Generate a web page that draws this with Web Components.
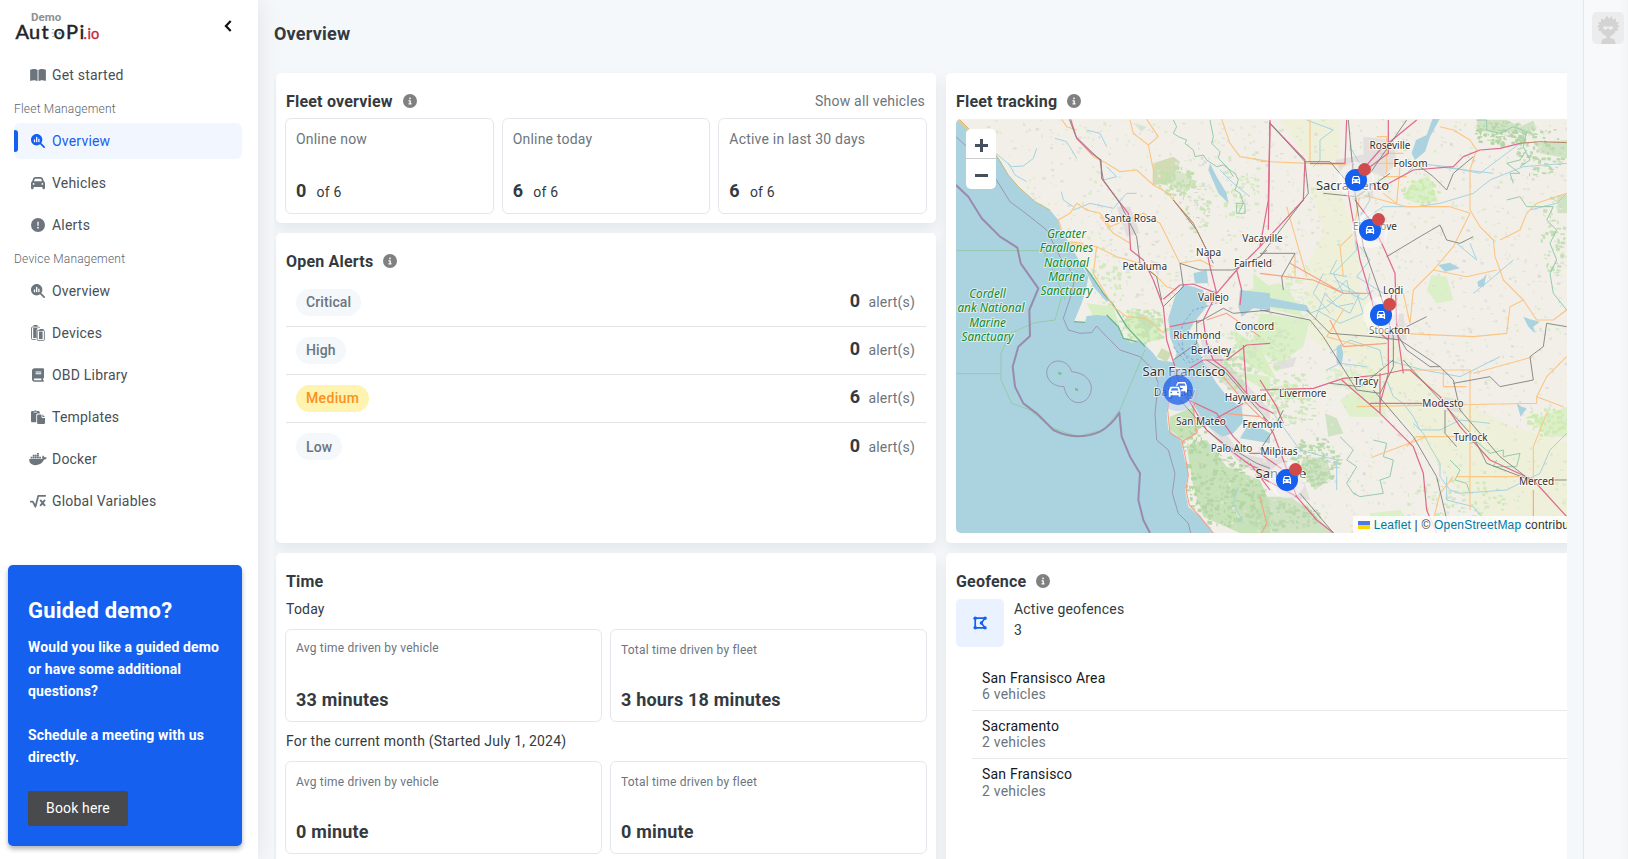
<!DOCTYPE html>
<html lang="en">
<head>
<meta charset="utf-8">
<title>Overview</title>
<style>
  html, body { height: 100%; }
  body { margin: 0; overflow: hidden; background: #f5f8fa; font: 14px/20px Roboto, "Liberation Sans", sans-serif; letter-spacing: .2px; color: #343a40; }
</style>
</head>
<body>
<fleet-app></fleet-app>
<script>
const define = (name, html, init) => {
  const t = document.createElement('template');
  t.innerHTML = html;
  customElements.define(name, class extends HTMLElement {
    constructor() {
      super();
      this.attachShadow({ mode: 'open' }).appendChild(t.content.cloneNode(true));
    }
    connectedCallback() { if (init) init(this, this.shadowRoot); }
  });
};

const ICONS = {
  bookopen: ['0 0 576 512', '<path d="M249.6 471.5c10.8 3.8 22.4-4.1 22.4-15.5V78.6c0-4.2-1.6-8.4-5-11C247.4 52 202.4 32 144 32C93.5 32 46.3 45.3 18.1 56.1C6.8 60.5 0 71.7 0 83.8V454.1c0 11.9 12.8 20.2 24.1 16.5C55.6 460.1 105.5 448 144 448c33.9 0 79 14 105.6 23.5zm76.8 0C353 462 398.1 448 432 448c38.5 0 88.4 12.1 119.9 22.6c11.3 3.8 24.1-4.6 24.1-16.5V83.8c0-12.1-6.8-23.3-18.1-27.6C529.7 45.3 482.5 32 432 32c-58.4 0-103.4 20-123 35.6c-3.3 2.6-5 6.8-5 11V456c0 11.4 11.7 19.3 22.4 15.5z"/>'],
  search: ['0 0 512 512', '<path d="M416 208c0 45.9-14.9 88.3-40 122.7L502.6 457.4c12.5 12.5 12.5 32.8 0 45.3s-32.8 12.5-45.3 0L330.7 376c-34.4 25.2-76.8 40-122.7 40C93.1 416 0 322.9 0 208S93.1 0 208 0S416 93.1 416 208zm-312 8v64c0 13.3 10.7 24 24 24s24-10.7 24-24V216c0-13.3-10.7-24-24-24s-24 10.7-24 24zm80-96V280c0 13.3 10.7 24 24 24s24-10.7 24-24V120c0-13.3-10.7-24-24-24s-24 10.7-24 24zm80 64v96c0 13.3 10.7 24 24 24s24-10.7 24-24V184c0-13.3-10.7-24-24-24s-24 10.7-24 24z"/>'],
  car: ['0 0 512 512', '<path d="M135.2 117.4L109.1 192H402.9l-26.1-74.6C372.3 104.6 360.2 96 346.6 96H165.4c-13.6 0-25.7 8.6-30.2 21.4zM39.6 196.8L74.8 96.3C88.3 57.8 124.6 32 165.4 32H346.6c40.8 0 77.1 25.8 90.6 64.3l35.2 100.5c23.2 9.6 39.6 32.5 39.6 59.2V400v48c0 17.7-14.3 32-32 32H448c-17.7 0-32-14.3-32-32V400H96v48c0 17.7-14.3 32-32 32H32c-17.7 0-32-14.3-32-32V400 256c0-26.7 16.4-49.6 39.6-59.2zM128 288a32 32 0 1 0 -64 0 32 32 0 1 0 64 0zm288 32a32 32 0 1 0 0-64 32 32 0 1 0 0 64z"/>'],
  alert: ['0 0 512 512', '<path d="M256 512A256 256 0 1 0 256 0a256 256 0 1 0 0 512zm0-384c13.3 0 24 10.7 24 24V264c0 13.3-10.7 24-24 24s-24-10.7-24-24V152c0-13.3 10.7-24 24-24zM224 352a32 32 0 1 1 64 0 32 32 0 1 1 -64 0z"/>'],
  info: ['0 0 512 512', '<path d="M256 512A256 256 0 1 0 256 0a256 256 0 1 0 0 512zM216 336h24V272H216c-13.3 0-24-10.7-24-24s10.7-24 24-24h48c13.3 0 24 10.7 24 24v88h8c13.3 0 24 10.7 24 24s-10.7 24-24 24H216c-13.3 0-24-10.7-24-24s10.7-24 24-24zm40-208a32 32 0 1 1 0 64 32 32 0 1 1 0-64z"/>'],
  devices: ['0 0 14 16', '<path d="M2.5 0h4v1.6h-4zM8.5 4h4v1.4h-4zM2.2 3h4.200v1.6H5.6V13H2.2zM8 6.6h3.6V14H8z"/><path d="M4.6 14.5H1.5a1 1 0 0 1-1-1V3a1 1 0 0 1 1-1h6a1 1 0 0 1 1 1M7 15.4a.8.8 0 0 1-.8-.8V6.2a.8.8 0 0 1 .8-.8h5.600a.8.8 0 0 1 .8.8v8.400a.8.8 0 0 1-.8.8z" fill="none" stroke="currentColor" stroke-width=".9"/>'],
  book: ['0 0 448 512', '<path d="M96 0C43 0 0 43 0 96V416c0 53 43 96 96 96H384h32c17.7 0 32-14.3 32-32s-14.3-32-32-32V384c17.7 0 32-14.3 32-32V32c0-17.7-14.3-32-32-32H384 96zm0 384H352v64H96c-17.7 0-32-14.3-32-32s14.3-32 32-32zm32-240c0-8.8 7.2-16 16-16H336c8.8 0 16 7.2 16 16s-7.2 16-16 16H144c-8.8 0-16-7.2-16-16zm16 48H336c8.8 0 16 7.2 16 16s-7.2 16-16 16H144c-8.8 0-16-7.2-16-16s7.200-16 16-16z"/>'],
  paste: ['0 0 512 512', '<path d="M48 32h70a46 46 0 0 1 84 0h70c26 0 48 22 48 48v48H250c-34 0-58 24-58 58v262H48c-26 0-48-22-48-48V80c0-26 22-48 48-48zm48 56h128V64H96z"/><path d="M272 160h112v96c0 18 14 32 32 32h96v176c0 26-22 48-48 48H272c-26 0-48-22-48-48V208c0-26 22-48 48-48zm144 0 96 96h-96z"/>'],
  docker: ['0 0 640 512', '<path d="M349.9 236.300h-66.1v-59.4h66.1v59.4zm0-204.3h-66.1v60.7h66.1V32zm78.2 144.8H362v59.4h66.1v-59.4zm-156.3-72.1h-66.1v60.1h66.1v-60.1zm78.1 0h-66.1v60.1h66.1v-60.1zm276.8 100c-14.4-9.7-47.6-13.2-73.1-8.4-3.3-24-16.7-44.9-41.1-63.7l-14-9.3-9.3 14c-18.4 27.8-23.4 73.6-3.7 103.8-8.7 4.7-25.8 11.1-48.4 10.7H2.4c-8.7 50.8 5.8 116.8 44 162.1 37.1 43.9 92.7 66.2 165.4 66.2 157.4 0 273.9-72.5 328.4-204.2 21.4.4 67.6.1 91.3-45.2 1.5-2.5 6.6-13.2 8.5-17.1l-13.3-8.9zm-511.1-27.9h-66v59.4h66.1v-59.4zm78.1 0h-66.1v59.4h66.1v-59.4zm78.1 0h-66.1v59.4h66.1v-59.4zm-78.1-72.1h-66.1v60.1h66.1v-60.1z"/>'],
  root: ['0 0 16 14', '<path d="M.8 7.700h2L5.400 12.700 8.300 1.800H15.200M10.600 6.400l4 5M14.600 6.400l-4 5" fill="none" stroke="currentColor" stroke-width="1.8" stroke-linecap="round" stroke-linejoin="round"/>'],
  chevron: ['0 0 8 12', '<path d="M6.700 1 1.900 6l4.800 5" fill="none" stroke="currentColor" stroke-width="2.200"/>'],
  polygon: ['0 0 14 14', '<path d="M2.200 2.200H12L8.300 7l3.700 4.800H2.200z" fill="none" stroke="currentColor" stroke-width="1.700"/><circle cx="2.200" cy="2.200" r="1.800"/><circle cx="12" cy="2.200" r="1.700"/><circle cx="2.200" cy="11.800" r="1.800"/><circle cx="12" cy="11.800" r="1.700"/><circle cx="8.400" cy="7" r="1.700"/>']
};
define('ui-icon', `<style>:host{display:inline-flex;flex:none}svg{display:block;fill:currentColor}</style><svg></svg>`, (el, r) => {
  const icon = ICONS[el.getAttribute('name')];
  if (!icon) return;
  const s = r.querySelector('svg');
  s.setAttribute('viewBox', icon[0]);
  s.setAttribute('width', el.getAttribute('w') || 14);
  s.setAttribute('height', el.getAttribute('h') || 14);
  s.innerHTML = icon[1];
});

define('brand-logo', `<style>:host{display:block}svg{display:block}</style>
<svg width="90" height="32" viewBox="14 10 90 32" letter-spacing="0">
  <text x="31" y="21" font-family="Roboto" font-weight="700" font-size="11.500" fill="#8d9093">Demo</text>
  <text font-family="Lato" font-size="20" y="38.500" fill="#222428" stroke="#222428" stroke-width=".5"><tspan x="15.500 29 41.500 53.600 66 79.500">AutoPi</tspan></text>
  <text font-family="Lato" font-size="14.500" x="83.500 87.500 91" y="38.500" fill="#c41e3a" stroke="#c41e3a" stroke-width=".3">.io</text>
  <circle cx="59.700" cy="33.300" r="1.300" fill="#59a9e8"/>
  <path d="M52 29.500h2M51.500 33h2M52 36.500h2" stroke="#aaa" stroke-width="1"/>
</svg>`);

define('nav-item', `<style>
:host{display:flex;align-items:center;height:36px;margin-bottom:6px;border-radius:6px;color:#495057;position:relative}
:host([last]){margin-bottom:0}
.i{width:47px;display:flex;justify-content:center;color:#6c757d;flex:none;margin-right:-9px}
:host([active]){background:#f2f7ff;color:#1560ef}
:host([active]) .i{color:#1560ef}
:host([active])::before{content:"";position:absolute;left:0;top:7px;width:4px;height:22px;border-radius:1px 3px 3px 1px;background:#1560ef}
</style><span class="i"></span><slot></slot>`, (el, r) => {
  const n = document.createElement('ui-icon');
  for (const a of ['name', 'w', 'h']) if (el.hasAttribute(a)) n.setAttribute(a, el.getAttribute(a));
  r.querySelector('.i').replaceChildren(n);
});

define('nav-label', `<style>:host{display:flex;align-items:center;height:30px;padding-top:2px;box-sizing:border-box;font-size:12px;color:#5c656d;font-weight:300}</style><slot></slot>`);

define('promo-card', `<style>
:host{display:block;box-sizing:border-box;width:234px;height:281px;margin-left:8px;padding:33px 20px 0;border-radius:5px;background:#1560ef;color:#fff;box-shadow:0 3px 5px rgba(0,0,0,.3)}
h2{margin:0 0 13px;font-size:22px;line-height:25px;font-weight:700;letter-spacing:.2px}
p{margin:0 0 22px;line-height:22px;font-weight:700;letter-spacing:.12px}
p+p{margin-bottom:23px}
button{display:block;font:14px/20px Roboto;letter-spacing:.15px;border:0;width:100px;height:35px;border-radius:2px;background:#484a4c;color:#fff;padding:0 0 1px}
</style><h2><slot name="title"></slot></h2><p><slot name="a"></slot></p><p><slot name="b"></slot></p><button><slot name="cta"></slot></button>`);

define('app-sidebar', `<style>
:host{display:flex;flex-direction:column;width:258px;height:859px;background:#fff;box-shadow:0 0 24px rgba(0,0,0,.09);position:relative;z-index:2}
header{display:flex;height:47px;padding:10px 26px 0 14px;box-sizing:border-box;justify-content:space-between;color:#111}
.c{padding-top:10px;display:flex;align-items:flex-start}
nav{padding:10px 16px 0 14px;height:508px;box-sizing:border-box}
promo-card{margin-top:10px}
</style>
<header><brand-logo></brand-logo><span class="c"><ui-icon name="chevron" w="8" h="12"></ui-icon></span></header>
<nav>
<nav-item name="bookopen" w="16" last>Get started</nav-item>
<nav-label>Fleet Management</nav-label>
<nav-item name="search" active>Overview</nav-item>
<nav-item name="car">Vehicles</nav-item>
<nav-item name="alert" last>Alerts</nav-item>
<nav-label>Device Management</nav-label>
<nav-item name="search">Overview</nav-item>
<nav-item name="devices" h="16">Devices</nav-item>
<nav-item name="book" w="12">OBD Library</nav-item>
<nav-item name="paste">Templates</nav-item>
<nav-item name="docker" w="18">Docker</nav-item>
<nav-item name="root" w="16">Global Variables</nav-item>
</nav>
<promo-card><span slot="title">Guided demo?</span><span slot="a">Would you like a guided demo or have some additional questions?</span><span slot="b">Schedule a meeting with us directly.</span><span slot="cta">Book here</span></promo-card>`);

define('dash-card', `<style>
:host{display:flex;flex-direction:column;box-sizing:border-box;background:#fff;border-radius:5px;padding:16px 10px 0;box-shadow:0 6px 14px rgba(0,20,20,.07)}
header{display:flex;align-items:center;height:24px;flex:none}
h3{margin:2px 0 0;font-size:16px;line-height:24px;font-weight:700}
ui-icon{color:#808080;margin-left:10px}
.x{margin-left:auto;color:#6c757d;padding-right:1px}
:host([noinfo]) ui-icon{display:none}
</style><header><h3><slot name="title"></slot></h3><ui-icon name="info"></ui-icon><span class="x"><slot name="action"></slot></span></header><slot></slot>`);

define('count-box', `<style>
:host{display:flex;flex:1 1 0;flex-direction:column;justify-content:space-between;box-sizing:border-box;height:96px;border:1px solid #e6e7ec;border-radius:6px;padding:10px 10px 12px;color:#6c757d}
.v{color:#343a40;display:flex;align-items:baseline;height:20px}
b{font-size:18px;margin-right:10px}
</style><slot></slot><span class="v"><b><slot name="n"></slot></b><slot name="of"></slot></span>`);

define('time-box', `<style>
:host{display:flex;flex:1 1 0;flex-direction:column;justify-content:space-between;box-sizing:border-box;height:93px;border:1px solid #e6e7ec;border-radius:6px;padding:10px 10px 11px;font-size:12px;line-height:16px;color:#6c757d}
:host([low]){padding-top:12px}
b{font-size:18px;line-height:20px;color:#343a40;letter-spacing:.2px}
</style><slot></slot><b><slot name="v"></slot></b>`);

define('box-row', `<style>:host{display:flex;gap:8px;margin:0 -1px}</style><slot></slot>`);

define('alert-row', `<style>
:host{display:flex;align-items:center;box-sizing:border-box;height:48px;border-bottom:1px solid #e2e3e5;padding:0 11px 1px 10px}
:host([last]){border:0}
.p{background:#f4f8fa;color:#6c757d;border-radius:14px;padding:3.500px 10px;font-weight:500;letter-spacing:.1px}
:host([warn]) .p{background:#fff3b0;color:#fd8f1c;letter-spacing:.35px}
b{margin:-2px 8px 0 auto;font-size:18px}
.u{color:#6c757d}
</style><span class="p"><slot></slot></span><b><slot name="n"></slot></b><span class="u">alert(s)</span>`);

define('fence-item', `<style>
:host{display:block;box-sizing:border-box;height:48px;margin-left:16px;padding:7px 10px 0;border-bottom:1px solid #e8e9ea;line-height:16px;color:#6c757d}
:host([last]){border:0}
b{display:block;font-weight:400;color:#16181b}
:host([last]) b{padding-bottom:1px}
</style><b><slot></slot></b><slot name="s"></slot>`);

define('fence-head', `<style>
:host{display:flex;gap:10px;height:48px;margin:6px 0 16px}
.t{width:48px;height:48px;border-radius:5px;background:#ebf2ff;color:#1560ef;display:flex;align-items:center;justify-content:center}
p{margin:0;line-height:21px}
</style><span class="t"><ui-icon name="polygon" w="14" h="14"></ui-icon></span><div><p><slot></slot></p><p><slot name="n"></slot></p></div>`);

define('map-pin', `<style>
:host{position:absolute;width:22px;height:22px;margin:-11px 0 0 -11px;border-radius:50%;background:#1560ef;color:#fff;display:flex;align-items:center;justify-content:center;box-shadow:0 0 0 7px rgba(255,255,255,.45)}
:host::after{content:"";position:absolute;width:13px;height:13px;border-radius:50%;background:#d14b4d;left:13px;top:-6px}
svg{display:block}
</style><svg width="10" height="10" viewBox="0 0 10 10"><path fill="#fff" fill-rule="evenodd" d="M2.700.9h4.600q.6 0 .8.6L9.100 4.300V8.900H7.800V7.900H2.200v1H.9V4.300L1.900 1.500q.2-.6.800-.6zM3 2 2.300 4.100h5.400L7 2zM2.200 5.100h1.300v1.300H2.200zm4.300 0h1.300v1.300H6.500z"/></svg>`);

define('cluster-pin', `<style>
:host{position:absolute;width:30px;height:30px;margin:-15px 0 0 -15px;border-radius:50%;background:rgba(38,104,235,.82);color:#fff;box-shadow:0 0 0 6px rgba(170,205,240,.5)}
svg{display:block}
</style><svg width="30" height="30" viewBox="0 0 30 30" fill="#fff" fill-rule="evenodd">
<path d="M15.300 7h6.400q.7 0 1 .7L24 11v6.600h-1.700v-1.300h-4.100v-2.100h1.400v-1.300h-2l-1-2.100h5.900l-.8-2.300h-6.400L14.500 10.800h-1.700L14.300 7.700q.3-.7 1-.7z"/>
<path d="M8.100 11.800h7q.7 0 1 .7l1.400 3.300v5.900h-1.800v-1.400H7.500v1.400H5.700v-5.900l1.400-3.300q.3-.7 1-.7zm.6 1.400-.9 2.300h7.600l-.9-2.300zm-1.200 3.600v1.400h1.600v-1.400zm6.600 0v1.400h1.600v-1.400z"/></svg>`);

const LABELS = [
  ['Santa Rosa',1130.500,222,10],['Petaluma',1144.700,270,10],['Napa',1208.600,255.500,10],['Vacaville',1262.500,241.500,10],['Fairfield',1253,266.500,10],
  ['Vallejo',1213.500,301,10],['Richmond',1197,339,10],['Berkeley',1211,354,10],['Concord',1254.500,329.500,10],['San Francisco',1184,376,13],
  ['Daly City',1174.500,395.500,10],['Hayward',1245.600,400.500,10],['San Mateo',1201,425,10],['Fremont',1262.500,428,10],['Palo Alto',1231.500,452,10],
  ['Milpitas',1279,454.500,10],['San Jose',1281,478,13],['Livermore',1302.700,397,10],['Tracy',1366,384.500,10],['Modesto',1443,407,10],
  ['Turlock',1470.500,440.500,10],['Merced',1536.500,484.500,10],['Stockton',1389.500,334,10],['Lodi',1393,293.500,10],['Elk Grove',1375,229.500,10],
  ['Sacramento',1352.500,190,13],['Roseville',1390,149,10],['Folsom',1410.500,166.500,10]
];
const MARINE = [['Greater',1066.500,237.500],['Farallones',1066.500,252],['National',1066.500,266.500],['Marine',1066.500,281],['Sanctuary',1066.500,295],
  ['Cordell',987.500,298],['ank National',991,312],['Marine',987.500,326.500],['Sanctuary',987.500,341]];

/* Woodland and park clusters: centre, radii, count, tone. */
const WOODS = [
  [1215,490,48,38,260,'#b3d6a4'],[1192,435,14,18,60,'#b3d6a4'],[1312,460,28,24,170,'#b9d9ac'],[1280,515,40,14,120,'#b9d9ac'],
  [1500,132,30,12,90,'#b3d6a4'],[1540,150,24,26,80,'#b9d9ac'],[1552,235,12,40,60,'#c3e0b4'],[1258,345,34,26,150,'#cfe8bd'],
  [1290,400,26,30,110,'#cbe6b9'],[1232,368,16,20,70,'#c3e0b4'],[1140,325,26,18,110,'#c6e3b4'],[1176,180,18,16,70,'#c3dfae'],
  [1195,205,14,26,50,'#cbe2ba'],[1240,180,20,40,60,'#d3e9bf'],[1108,275,20,30,50,'#d3e9bf'],[1350,375,26,14,80,'#d7efc2'],
  [1455,500,50,24,90,'#cfe8bd'],[1545,420,20,14,70,'#cdebb0'],[1420,190,20,14,60,'#cdebb0'],[1300,290,18,26,60,'#d7efc2']
];
/* Scattered vegetation and built-up specks, on land only. */
const specks = () => {
  let s = 20240701;
  const rnd = () => (s = (s * 1103515245 + 12345) & 0x7fffffff) / 0x7fffffff;
  const tones = ['#dcecc8', '#d9e9c9', '#dddcda', '#e6ead2', '#e5e3df', '#e2e0dd'];
  const blob = (x, y, w, h, c) => `<path fill="${c}" d="M${x.toFixed(1)} ${y.toFixed(1)}l${w.toFixed(1)} ${(h * .3).toFixed(1)} ${(-w * .2).toFixed(1)} ${h.toFixed(1)} ${(-w * .9).toFixed(1)} ${(-h * .2).toFixed(1)}z"/>`;
  let out = '';
  for (let i = 0; i < 2600; i++) {
    const x = 960 + rnd() * 610, y = 119 + rnd() * 414, w = .8 + rnd() * 3, h = .6 + rnd() * 2.200;
    const edge = y < 265 ? 985 + (y - 150) * .75 : y < 360 ? 1085 + (y - 265) * .9 : 1178 + (y - 360) * .2;
    if (x < edge + 12) continue;
    out += blob(x, y, w, h, tones[Math.floor(rnd() * 6)]);
  }
  for (const [cx, cy, rx, ry, n, c] of WOODS)
    for (let i = 0; i < n; i++) {
      const a = rnd() * 6.283, d = Math.sqrt(rnd());
      out += blob(cx + Math.cos(a) * d * rx, cy + Math.sin(a) * d * ry, 1 + rnd() * 4, .8 + rnd() * 2.500, c);
    }
  return out;
};

define('fleet-map', `<style>
:host{display:block;position:relative;height:414px;margin-top:6px;border-radius:5px;overflow:hidden;background:#f2efe9}
svg{display:block}
.z{position:absolute;left:10px;top:10px;width:30px;height:60px;background:#fff;border-radius:5px;overflow:hidden}
.z i{display:block;box-sizing:border-box;height:30px;position:relative;color:#464f5b}
.z i:first-child{border-bottom:1px solid #ccc}
.z i::before,.z i.p::after{content:"";position:absolute;left:9px;top:15px;width:13px;height:3px;background:currentColor}
.z i.p::after{left:14px;top:10px;width:3px;height:13px}
.a{position:absolute;right:0;bottom:0;height:17px;box-sizing:border-box;padding:1px 6px 0 5px;background:rgba(255,255,255,.8);font:12px/16px "Liberation Sans",Arial,sans-serif;letter-spacing:.2px;white-space:nowrap;color:#333;display:flex;align-items:center}
.a em{font-style:normal;color:#0078a8}
.f{width:12px;height:8px;margin-right:4px;background:linear-gradient(#4c7be1 50%,#ffd500 50%)}
</style>
<svg width="640" height="414" viewBox="956 119 640 414">
<g id="land">
 <g transform="translate(1260 100) scale(.33333)">
  <path fill="#eef0d5" d="M150 260L230 250 290 400 300 560 400 700 430 760 520 860 600 900 760 980 921 1030V1300H700L560 1130 430 960 300 900 240 830 330 800 150 720 140 500 190 400zM60 60H240V180L150 190z" opacity=".8"/>
  <path fill="#d7efc2" d="M450 255L505 225 535 305 470 310 430 295zM515 525L560 530 580 600 530 610 500 570zM10 560L60 550 100 590 130 650 20 625-40 570zM0 640L150 660 130 740 60 790-30 740zM840 950L921 920V1010L860 1010 825 970zM40 860L110 850 130 900 50 890zM330 1240L420 1230 480 1300H330z" opacity=".85"/>
  <path fill="#b9d9ac" d="M830 130L921 120V175L840 160zM892 285H921V340H892zM650 60H740L780 80 820 62 830 90 700 100 655 90zM130 1070L200 1075 215 1130 165 1170 120 1110zM195 940L230 955 250 1000 205 1010zM0 1190L90 1190 150 1230 220 1300H0z" opacity=".6"/>
  <path fill="#dff0cb" d="M240 900L300 860 360 880 380 950 270 950z"/>
  <path fill="#dcd9d9" d="M310 110L400 120 410 190 370 230 310 210zM225 180L330 160 340 290 280 300zM320 350L380 360 370 430 330 420zM370 650L430 640 440 720 380 720zM550 890L600 900 610 940 560 930zM0 1080L60 1070 130 1140 150 1200 60 1190zM40 790L110 770 100 800 50 810z" opacity=".75"/>
 </g>
 <g transform="translate(940 60) scale(.33333)">
  <path fill="#d7efc2" d="M570 750L660 780 660 840 600 850 550 800zM850 930L990 950V1000L890 940zM800 900L900 950 930 1010 870 970zM880 810L960 860 1010 960 900 900zM940 640L990 680V720L940 700zM440 730L520 740 540 800 460 770z"/>
  <path fill="#cfdcb4" d="M640 310L700 290 720 305 690 370 640 375zM665 865L695 880 680 905 650 890z"/>
  <path fill="#c2dfb4" d="M690 1070L760 1040 775 1120 730 1140 690 1110zM740 1160L800 1140 860 1220 960 1260 990 1330V1419H900L790 1370 760 1280zM590 760L650 790 620 820z" opacity=".9"/>
  <path fill="#c4dfb5" d="M700 330L750 345 770 380 740 370 720 400 690 370zM580 190L620 200 605 215z" opacity=".6"/>
  <path fill="#dcd9d9" d="M530 440L570 440 600 520 560 530zM700 920L735 915 745 990 700 990zM770 1060L830 1080 900 1180 990 1200V1260L900 1210zM780 830L830 870 900 950 990 1050V1080L900 1010 800 930zM630 600L660 610 655 650zM780 700L830 690 840 730 800 730z" opacity=".8"/>
 </g>
</g>
<g id="specks"></g>
<g fill="none" stroke-linejoin="round" transform="translate(940 60) scale(.33333)">
 <g fill="#aad3df">
  <path d="M48 177H58L85 205 168 285 180 300 205 345 235 380 285 425 330 450 355 480 362 510 385 545 425 615 445 650 438 690 425 730 402 785 435 787 440 768 470 765 500 768 530 795 545 830 575 850 600 840 640 880 655 900 700 907 710 880 690 830 685 775 705 710 730 672 790 690 800 740 760 790 745 820 775 850 785 895 805 930 830 970 870 1020 905 1040 910 1085 880 1120 845 1130 800 1095 770 1050 745 1010 742 930 700 918 690 990 680 1060 685 1110 720 1135 735 1200 745 1240 735 1290 745 1340 780 1370 820 1419H48z"/>
  <path d="M425 605L450 640 480 690 510 720 500 725 460 680zM900 690L990 700V750L940 745 905 770 895 740zM760 640L800 630 805 670 765 670zM810 310L830 350 860 400 865 430 835 400 805 330zM930 1085L990 1120V1150L900 1135z"/>
  <path d="M960 708L1100 736 1110 756 960 736zM1415 280L1428 240 1460 225 1480 170 1500 175 1470 230 1455 275 1425 300zM1495 615L1530 608 1560 625 1515 635zM1615 680L1612 665 1630 655 1640 640 1632 680zM1750 770L1770 778 1800 785 1780 800 1785 820 1765 800zM1190 860L1202 852 1210 880 1205 915 1190 910zM1730 1030L1745 1040 1760 1045 1742 1070z"/>
 </g>
 <g stroke="#a5d2e0" stroke-width="3">
  <path d="M168 280L215 320 250 318 280 295 290 265M345 235L380 245 410 295M440 210L480 220 500 260M364 395L370 420 400 440M400 450L450 430 520 445 560 400 590 400M205 310L225 345 260 365M500 320L530 350 490 360M840 330L880 370 930 410M895 1280L880 1330 910 1390M1120 320L1140 300 1140 240 1180 210 1100 180"/>
  <path d="M1110 760L1160 740 1210 700 1180 640 1250 570 1240 500 1330 440 1430 440 1500 430 1600 400 1650 360 1750 320 1880 310M1160 720L1230 760 1260 700 1200 690M1130 750L1200 790 1270 760 1250 700 1190 660M1260 560L1290 600 1250 650 1330 700M1340 960L1360 1010 1390 1030 1420 1070 1440 1110 1500 1110 1560 1080 1650 1090M1420 1090L1450 1120 1470 1160 1500 1210 1500 1250 1530 1290 1560 1300 1700 1290 1760 1260 1800 1240 1830 1170 1880 1120M1340 900L1450 930 1560 950 1680 890M1520 1250L1520 1320 1600 1340 1650 1400M1000 1060L1080 1170 1190 1200 1190 1290M1400 340L1430 310 1520 320 1620 340 1740 250M1550 550L1610 600 1590 550M1490 320L1660 340M1720 600L1650 660 1600 700M1880 400L1850 430 1770 450"/>
  <path d="M1125 780L1155 700 1190 740 1240 730M1150 640L1120 700 1170 760M1230 260L1270 330 1290 420 1240 500M1160 930L1200 910 1280 920M1180 700L1220 660 1230 700 1270 720 1300 690M1190 600L1170 640 1220 650M1290 640L1280 690 1310 740M1170 880L1230 840 1320 870 1330 920"/>
 </g>
 <g stroke="#95cbaa" stroke-width="3">
  <path d="M48 572H310L370 700 375 720M365 710L345 780 285 788 210 820 183 880 183 960 215 1030 270 1050 330 1100 410 1130 490 1110 540 1050 615 870M48 941H183"/>
  <path d="M700 180L710 200 700 220 715 230 740 240 735 250 760 270 765 290 790 285 800 300 830 320 850 315 870 330 885 340 895 360 885 390 900 400 910 430 895 460M810 180L820 230 815 250 840 275 835 295 860 320 880 350M890 430H915V460H890z"/>
  <path d="M1200 1130L1240 1170 1220 1200 1250 1220 1220 1270 1240 1300 1260 1310 1330 1300 1320 1260 1350 1250 1360 1200 1330 1190 1340 1150 1300 1140M1590 1150L1610 1145 1650 1180 1690 1170 1690 1190 1740 1180 1730 1220 1660 1220 1670 1200M1530 1200L1560 1230 1545 1260 1580 1270 1590 1300M1610 180L1640 180 1640 210 1680 220 1720 200 1760 215 1750 260 1770 300 1740 320M1700 420L1740 410 1760 440 1840 440 1820 480 1850 510 1830 550 1850 600 1830 640 1840 700 1880 750M1720 370L1710 340 1740 340 1700 310 1740 300 1760 270"/>
 </g>
 <path stroke="#6db590" stroke-width="4" d="M425 610L450 640 490 700 520 735 560 800 615 860M500 765L535 800 550 835 590 845M402 785L435 787"/>
 <path stroke="#c9b66a" stroke-width="2.500" d="M60 180L85 205 168 285 205 345 235 380 285 425 330 450"/>
 <g stroke="#9a8aab">
  <path stroke-width="6" d="M48 375L85 410 125 475 180 530 232 563 242 610 295 685 268 750 270 828 235 860 218 920 225 980 250 1030 290 1060 340 1110Q410 1145 480 1115 515 1095 538 1058L545 1130 570 1190 600 1240 595 1320 610 1380 630 1419"/>
  <path stroke-width="2.500" d="M48 230L80 260 160 345 210 425 270 470 320 510 360 590 405 650 395 700 370 775 385 810 420 820 455 818 470 798 500 830 540 870 600 890 640 930 655 970 645 1060 650 1140 685 1170 705 1240 697 1300 715 1360 745 1390 752 1419M320 935C325 895 380 890 395 935 450 940 470 985 440 1018 415 1040 380 1025 372 980 345 980 320 965 320 935z"/>
 </g>
 <path fill="#7abb92" d="M355 935l10 3-2 8-8-4zM405 983l10 3-2 8-8-3z"/>
 <path stroke="#8299df" stroke-width="2.500" stroke-dasharray="9 6" d="M720 820L730 790 760 750 830 730M700 860L740 910M715 850L750 910 790 890M760 900L730 880 725 830"/>
 <g stroke="#fbc583" stroke-width="3.300">
  <path d="M48 175L90 215M365 178L380 200 410 210M410 235L460 290 500 310 540 335 590 330 640 375 685 400 700 420 760 490M570 180L580 220 625 255 655 230 620 178M625 255L640 330 640 375M845 178L870 250 900 290 990 305M355 480L390 460 410 430 440 450 480 460 510 500 560 480 610 460 660 490 690 550 720 610 780 600 820 620M380 550L470 560 530 590 600 610 640 640 680 680 710 690M470 560L460 640 520 740 560 770 620 775 670 820M385 545L430 550M480 470L520 520 570 550M355 480L365 510"/>
  <path d="M960 304L1110 310 1110 180M1100 310L1230 315M1065 580V650M1040 440L1100 650M1310 230H1340V340M1310 310H1400M1320 280H1390M1330 350H1400M1500 200L1540 210 1590 240 1610 270 1590 330 1590 450 1620 500 1660 540 1665 590 1680 630 1690 660 1750 720 1790 780 1840 780 1880 750M1590 460L1540 560 1480 630 1420 690 1410 790M1680 540L1740 510 1760 460 1790 430 1880 400M1480 630L1580 650 1670 630M1250 400L1400 440 1530 440 1590 460M1330 400L1370 430 1380 320M1210 650L1200 560 1240 520 1260 400M1380 820L1600 830 1700 820 1710 740 1750 720M1590 950V1350M1510 930V980H1580M1390 930H1590V950M1210 750L1160 830 1270 860M1400 1160L1430 1130 1510 1130M1250 1040L1790 1030 1790 1010 1870 1040M1550 1250H1750M1300 1190L1460 1130 1640 1130M1470 1420L1500 1300 1540 1250M1600 940L1780 890M1790 1010L1820 950 1880 890M1820 1060L1780 1160 1780 1270M1390 700L1410 790"/>
 </g>
 <g stroke="#f6a283" stroke-width="3.300">
  <path d="M690 990L683 1050 690 1120 725 1140 738 1200 745 1245 738 1290 748 1335 780 1370 820 1419M770 990L760 1050 770 1120 725 1145M1050 610L1210 700H1290M960 640L1120 660 1210 700M1170 780L1210 860 1340 850M960 1310L980 1390 965 1420M1780 1290V1420M800 780L860 760 960 830M850 1060L960 1070 1000 1100M850 950L900 1010 960 1070"/>
 </g>
 <g stroke="#e06a8c" stroke-width="3.700">
  <path d="M392 178L410 235 455 280 483 300 485 355 530 415 565 460 572 570 610 600 640 660 655 700 670 740 680 840 700 905 715 950M670 718L720 675 760 672 830 700 890 630 905 690 900 735M990 180L985 420 960 560 890 630M800 570L810 620 830 700 790 780 800 850 820 900 860 930 920 1000 960 1040 1000 1060M690 800L790 780M860 900L920 855 990 850M740 930L790 900 850 900M700 930L740 1010 800 1110 870 1170 930 1215 990 1240M745 1020L830 1060 880 1130 930 1180 990 1180M820 1080L910 1030M910 855L920 1000M930 1210L990 1290"/>
  <path d="M990 185L985 510M990 190L1095 300 1090 420 960 560M1110 310H1215L1220 180M1240 310L1225 400 1260 600 1290 700 1320 820 1345 840 1345 940 1320 1030M1245 420L1290 480 1330 560 1365 640 1370 800 1390 940M1250 350L1320 270 1430 180M1345 180V280L1250 350M1310 390L1420 330 1540 320 1570 290 1620 270 1680 265 1740 250M960 960L1010 1040 1030 1090M960 990L1120 985 1210 955 1320 945 1390 930H1410M1205 960L1320 1060 1420 1160 1450 1240 1460 1350 1490 1420M1290 1030H1440L1540 1040M1320 940V1060M1410 930L1500 1010 1560 1100 1650 1200 1780 1260 1880 1370M1345 840L1355 700M960 1250L1070 1310 1130 1380 1180 1419M960 1180L1030 1230 1060 1270M970 1070L1000 1120 1030 1200 1070 1310"/>
 </g>
 <g stroke="#80807e" stroke-width="2.700">
  <path d="M388 178L408 230 480 300 490 360 540 430 590 530 600 610 650 650 665 720M700 420L770 510 800 570 820 610M720 610L730 680 670 740M720 610L780 630 880 630 960 590 980 570M770 790L850 745 880 760 990 750M700 900L770 850 770 780M720 1020L800 1110 850 1150 950 1210 990 1225M800 900L860 940 920 1010 990 1090"/>
  <path d="M990 190L1095 305H1170L1225 370M1095 305L1105 400 960 590M960 580H1065L1025 650 1030 690M1225 180L1245 400 1270 560 1320 700 1360 830 1360 920 1320 1000 1250 990 1150 830 1110 780 960 750M1360 900L1260 980 1170 970M1350 340L1250 410 1150 400M1400 180L1290 340M1340 590L1440 530 1500 495 1520 540 1560 550 1600 530M1440 320L1480 350 1520 390 1540 340 1600 290M1380 840L1500 920 1540 960 1560 1050 1680 1190 1770 1260M1400 800L1460 770M1300 990L1420 1130 1490 1250 1530 1420M1370 820L1400 870 1470 920H1500M1540 970L1650 950 1680 980 1780 960 1770 890 1810 860 1820 790 1880 800M1515 1050V1120L1550 1160M1100 750L1170 820 1300 830 1380 840M1390 900L1500 1020 1600 1130 1640 1210 1770 1260H1880M1080 1300L1180 1419M960 1170L1000 1110 1030 1050"/>
 </g>
 <path stroke="#b88364" stroke-width="3" d="M1740 250L1800 245 1880 248M700 420L760 490 800 570"/>
</g>
<g id="labels" font-family="Noto Sans, sans-serif" text-anchor="middle" stroke="#fff" stroke-opacity=".75" stroke-width="2" stroke-linejoin="round" paint-order="stroke" letter-spacing="0"></g>
</svg>
<map-pin style="left:400px;top:61px"></map-pin>
<map-pin style="left:414px;top:111px"></map-pin>
<map-pin style="left:425px;top:196px"></map-pin>
<map-pin style="left:331px;top:361px"></map-pin>
<cluster-pin style="left:222px;top:271px"></cluster-pin>
<div class="z"><i class="p"></i><i></i></div>
<div class="a"><span class="f"></span><span><em>Leaflet</em> | © <em>OpenStreetMap</em> contributors</span></div>`, (el, r) => {
  r.getElementById('specks').innerHTML = specks();
  r.getElementById('labels').innerHTML =
    LABELS.map(([t, x, y, s]) => `<text x="${x}" y="${y}" font-size="${s}" fill="#333">${t}</text>`).join('') +
    MARINE.map(([t, x, y]) => `<text x="${x}" y="${y}" font-size="11.700" font-style="italic" fill="#138a2b" stroke-opacity=".6">${t}</text>`).join('');
});

define('user-rail', `<style>
:host{display:flex;justify-content:center;box-sizing:border-box;width:45px;height:859px;border-left:1px solid #e0e8eb;background:linear-gradient(90deg,#f8f9fb 80%,#f2f4f6);padding:12px 0 0 4px}
svg{display:block;border-radius:5px}
</style><svg width="32" height="32" viewBox="0 0 32 32"><rect width="32" height="32" fill="#ececec"/>
<path fill="#d3d3d3" d="M15 3.800l2 3 2.800-2.500.8 3.500 3.400-1.300-.2 3.500 3.200.2-1.800 2.600 2.600 1.700-2.700 1.500 1.600 2.500-3 .3q-1.500 4-5.500 5.500v2l4 1 1.500 4.700H9l1.300-4.700 4-1v-2q-4-1.500-5.600-5.300l-3-.5 1.800-2.400L5 14.500l2.500-1.700L5.800 10.200l3.200-.2-.1-3.600 3.200 1.300z"/>
<path fill="#efefef" d="M11 14.500h10v.8a2.300 2.300 0 0 1-4.600.2h-.7a2.300 2.300 0 0 1-4.600-.2z"/></svg>`);

define('fleet-app', `<style>
:host{display:flex;width:1628px;height:859px}
main{flex:1;min-width:0;padding:0 16px;height:859px;box-sizing:border-box;display:flex;flex-direction:column}
h1{margin:0;font-size:18px;line-height:24px;font-weight:700;height:46px;padding-top:22px;letter-spacing:.2px}
.g{overflow:hidden;flex:1;padding:5px 0 0 2px;display:grid;grid-template-columns:660px 660px;grid-template-rows:150px 310px 400px;gap:10px;min-height:0}
.m{grid-column:2;grid-row:1/3}
.s{line-height:20px;margin:6px 0}
</style>
<app-sidebar></app-sidebar>
<main><h1>Overview</h1>
<div class="g">
<dash-card><span slot="title">Fleet overview</span><span slot="action">Show all vehicles</span>
 <box-row style="margin-top:5px"><count-box>Online now<span slot="n">0</span><span slot="of">of 6</span></count-box><count-box>Online today<span slot="n">6</span><span slot="of">of 6</span></count-box><count-box>Active in last 30 days<span slot="n">6</span><span slot="of">of 6</span></count-box></box-row>
</dash-card>
<dash-card class="m"><span slot="title">Fleet tracking</span><fleet-map></fleet-map></dash-card>
<dash-card><span slot="title">Open Alerts</span>
 <alert-row style="margin-top:6px">Critical<span slot="n">0</span></alert-row><alert-row>High<span slot="n">0</span></alert-row><alert-row warn>Medium<span slot="n">6</span></alert-row><alert-row last>Low<span slot="n">0</span></alert-row>
</dash-card>
<dash-card noinfo><span slot="title">Time</span>
 <div class="s" style="margin:6px 0 10px">Today</div>
 <box-row><time-box>Avg time driven by vehicle<span slot="v">33 minutes</span></time-box><time-box low>Total time driven by fleet<span slot="v">3 hours 18 minutes</span></time-box></box-row>
 <div class="s" style="margin:9px 0 10px">For the current month (Started July 1, 2024)</div>
 <box-row><time-box low>Avg time driven by vehicle<span slot="v">0 minute</span></time-box><time-box low>Total time driven by fleet<span slot="v">0 minute</span></time-box></box-row>
</dash-card>
<dash-card><span slot="title">Geofence</span>
 <fence-head>Active geofences<span slot="n">3</span></fence-head>
 <fence-item>San Fransisco Area<span slot="s">6 vehicles</span></fence-item><fence-item>Sacramento<span slot="s">2 vehicles</span></fence-item><fence-item last>San Fransisco<span slot="s">2 vehicles</span></fence-item>
</dash-card>
</div></main>
<user-rail></user-rail>`);
</script>
</body>
</html>
